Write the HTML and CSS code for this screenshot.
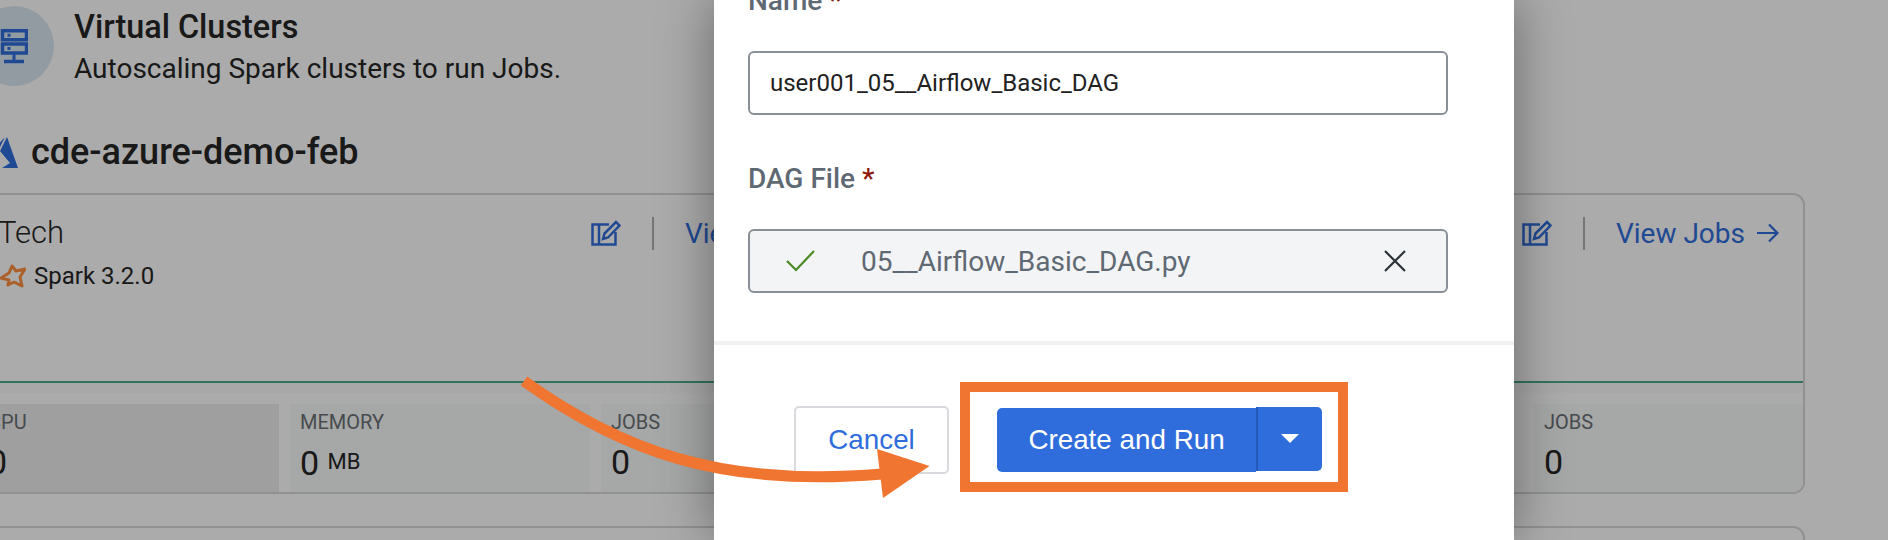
FILE: index.html
```html
<!DOCTYPE html>
<html lang="en">
  <head>
    <meta charset="UTF-8" />
    <title>Create Job</title>
    <link rel="stylesheet" href="styles.css">
  </head>
  <body>
    <div class="page">
      <main class="content">
        <header class="section-head">
          <div class="section-icon">
            <svg width="28" height="35" viewBox="0 0 28 35" fill="none" stroke="#2f6ddc" stroke-width="3.500">
              <rect x="2.500" y="1.750" width="24" height="9" />
              <rect x="2.500" y="15" width="24" height="9" />
              <path d="M14 25v7" stroke-width="3" />
              <path d="M4 32.500h20" />
              <path d="M7.500 6.300h3M7.500 19.500h3" stroke-width="3" />
            </svg>
          </div>
          <div>
            <h1 class="section-title">Virtual Clusters</h1>
            <p class="section-sub">Autoscaling Spark clusters to run Jobs.</p>
          </div>
        </header>

        <h2 class="cluster-name">
          <svg class="azure-logo" width="40" height="33" viewBox="-22 0 40 33">
            <path d="M5 1 L-14 22 L-20 32 L-3 32 L0 11 Z" fill="#2f6ddc" />
            <path d="M7 1 L18 32 L2 32 L10 27 L0 15 Z" fill="#2f6ddc" />
          </svg>
          cde-azure-demo-feb
        </h2>

        <section class="card">
          <div class="vc vc-left">
            <div class="vc-top">
              <div>
                <div class="vc-name">Tech</div>
                <div class="vc-version">
                  <svg width="26" height="24" viewBox="0 0 26 24" fill="none" stroke="#ff8f3f" stroke-width="3" stroke-linejoin="round">
                    <path d="M12 2 L16 7 L25 5 L20 13 L22 22 L14 18 L8 21 L9 16 L1 14 L9 9 Z" />
                  </svg>
                  Spark 3.2.0
                </div>
              </div>
              <div class="vc-actions">
                <svg class="edit-icon" width="30" height="26" viewBox="0 0 30 26" fill="none" stroke="#2f6ddc" stroke-width="2.500">
                  <path d="M18 4.500H1.500V24.500H24.500V12" />
                  <path d="M8 24V5" />
                  <path d="M12 19l1.500-5.500L25 2l3.500 3.500L17 17.500z" />
                </svg>
                <span class="vc-sep"></span>
                <a class="vc-link">View Jobs
                  <svg width="22" height="20" viewBox="0 0 22 20" fill="none" stroke="#2f6ddc" stroke-width="2.200">
                    <path d="M0 10h20M12 1.500l8.500 8.500-8.500 8.500" />
                  </svg>
                </a>
              </div>
            </div>
            <div class="vc-meter"></div>
            <div class="vc-stats">
              <div class="stat stat-cpu">
                <div class="stat-label">CPU</div>
                <div class="stat-value">0</div>
              </div>
              <div class="stat">
                <div class="stat-label">MEMORY</div>
                <div class="stat-value">0 <small>MB</small></div>
              </div>
              <div class="stat">
                <div class="stat-label">JOBS</div>
                <div class="stat-value">0</div>
              </div>
            </div>
          </div>
          <div class="vc vc-right">
            <div class="vc-top">
              <div></div>
              <div class="vc-actions">
                <svg class="edit-icon" width="30" height="26" viewBox="0 0 30 26" fill="none" stroke="#2f6ddc" stroke-width="2.500">
                  <path d="M18 4.500H1.500V24.500H24.500V12" />
                  <path d="M8 24V5" />
                  <path d="M12 19l1.500-5.500L25 2l3.500 3.500L17 17.500z" />
                </svg>
                <span class="vc-sep"></span>
                <a class="vc-link">View Jobs
                  <svg width="22" height="20" viewBox="0 0 22 20" fill="none" stroke="#2f6ddc" stroke-width="2.200">
                    <path d="M0 10h20M12 1.500l8.500 8.500-8.500 8.500" />
                  </svg>
                </a>
              </div>
            </div>
            <div class="vc-meter"></div>
            <div class="vc-stats vc-stats-right">
              <div class="stat">
                <div class="stat-label">JOBS</div>
                <div class="stat-value">0</div>
              </div>
            </div>
          </div>
        </section>

        <section class="card card-next"></section>
      </main>

      <div class="overlay"></div>

      <div class="modal">
        <div class="modal-body">
          <label class="field-label field-first">Name <span class="req">*</span></label>
          <div class="field-input">user001_05__Airflow_Basic_DAG</div>
          <label class="field-label">DAG File <span class="req">*</span></label>
          <div class="field-file">
            <svg class="file-check" width="30" height="22" viewBox="0 0 30 22" fill="none" stroke="#4a8a24" stroke-width="2.200">
              <path d="M1 11l9 9L28 1" />
            </svg>
            <span class="file-name">05__Airflow_Basic_DAG.py</span>
            <svg class="file-clear" width="22" height="22" viewBox="0 0 22 22" fill="none" stroke="#2b3238" stroke-width="2.200">
              <path d="M1 1l20 20M21 1L1 21" />
            </svg>
          </div>
        </div>
        <div class="modal-footer">
          <button type="button" class="btn-cancel">Cancel</button>
          <div class="btn-group">
            <button type="button" class="btn-primary">Create and Run</button>
            <button type="button" class="btn-caret"><span class="caret"></span></button>
          </div>
        </div>
      </div>

      <!-- annotation drawn over the screenshot -->
      <div class="callout"></div>
      <svg class="callout-arrow" width="1888" height="540" viewBox="0 0 1888 540">
        <path d="M524 381 C620 450 720 488 882 474" fill="none" stroke="#ef7530" stroke-width="11" />
        <polygon points="877,449 929.500,466 883,498" fill="#ef7530" />
      </svg>
    </div>
  </body>
</html>
```

FILE: styles.css
```css
* {
  box-sizing: border-box;
}

html,
body {
  margin: 0;
  height: 540px;
  overflow: hidden;
}

body {
  font-family: Roboto, "Liberation Sans", sans-serif;
  background-color: #fff;
  color: #262626;
}

.page {
  position: relative;
  width: 1888px;
  height: 540px;
  overflow: hidden;
}

/* page behind the dialog */
.content {
  margin-left: -26px;
  padding-top: 6px;
}

.section-head {
  display: flex;
  gap: 20px;
}

.section-icon {
  width: 80px;
  height: 80px;
  border-radius: 50%;
  background-color: #dbe8f2;
  display: flex;
  align-items: center;
  justify-content: center;
  flex-shrink: 0;
}

.section-title {
  margin: 3px 0 0;
  font-size: 32.400px;
  line-height: 36px;
  font-weight: 500;
}

.section-sub {
  margin: 6px 0 0;
  font-size: 28px;
  line-height: 36px;
}

.cluster-name {
  display: flex;
  align-items: center;
  gap: 13px;
  margin: 45px 0 0;
  height: 40px;
  font-size: 36px;
  font-weight: 500;
}

.azure-logo {
  margin-left: 4px;
  flex-shrink: 0;
}

.card {
  display: flex;
  width: 1831px;
  height: 301px;
  margin-top: 21px;
  border: 2px solid #d8d8d8;
  border-radius: 12px;
  overflow: hidden;
}

.card-next {
  margin-top: 32px;
}

.vc {
  display: flex;
  flex-direction: column;
  flex-shrink: 0;
}

.vc-left {
  width: 896px;
}

.vc-right {
  width: 931px;
}

.vc-top {
  display: flex;
  justify-content: space-between;
  height: 186px;
  padding: 21px 24px 0 24px;
}

.vc-name {
  margin: -1px 0 0 -2px;
  font-size: 31px;
  font-weight: 300;
  line-height: 36px;
}

.vc-version {
  display: flex;
  align-items: center;
  gap: 8px;
  margin-top: 11px;
  font-size: 24px;
}

.vc-actions {
  display: flex;
  align-items: center;
  height: 34px;
}

.vc-sep {
  width: 2px;
  height: 33px;
  margin: 0 31px;
  background-color: #b0b0b0;
}

.vc-link {
  display: flex;
  align-items: center;
  gap: 12px;
  font-size: 28px;
  color: #2f6ddc;
}

.vc-meter {
  height: 12px;
  border-top: 2px solid #4fae8a;
  background-color: #fbfbfb;
}

.vc-stats {
  display: grid;
  grid-template-columns: 303px 300px 300px;
  gap: 11px;
  padding-top: 11px;
  flex: 1;
  background-color: #fff;
}

.vc-stats-right {
  display: flex;
  justify-content: flex-end;
}

.vc-stats-right .stat {
  width: 269px;
}

.stat {
  padding: 7px 10px 0;
  background-color: #f8faf9;
}

.stat-cpu {
  padding-left: 12px;
  background-color: #eeeeee;
}

.stat-label {
  font-size: 20px;
  line-height: 22px;
  color: #6a7075;
}

.stat-value {
  margin-top: 10px;
  font-size: 34px;
  line-height: 38px;
}

.stat-value small {
  font-size: 22px;
  vertical-align: 6px;
}

.overlay {
  position: absolute;
  inset: 0;
  background-color: rgba(0, 0, 0, 0.33);
}

/* dialog */
.modal {
  position: absolute;
  top: 0;
  left: 714px;
  width: 800px;
  height: 540px;
  background-color: #fff;
  box-shadow: 0 0 50px rgba(0, 0, 0, 0.4);
  display: flex;
  flex-direction: column;
}

.modal-body {
  height: 341px;
  padding: 0 66px 0 34px;
  border-bottom: 4px solid #f1f1f1;
  box-sizing: content-box;
}

.field-label {
  display: block;
  margin-top: 49px;
  font-size: 28px;
  line-height: 30px;
  font-weight: 500;
  color: #5f6973;
}

.field-first {
  margin-top: 0;
  margin-bottom: -30px;
  position: relative;
  top: -14px;
}

.req {
  color: #8f1a0a;
}

.field-input,
.field-file {
  display: flex;
  align-items: center;
  height: 64px;
  border: 2px solid #888f96;
  border-radius: 6px;
}

.field-input {
  margin-top: 51px;
  padding-left: 20px;
  font-size: 24px;
  color: #222;
}

.field-file {
  margin-top: 35px;
  font-size: 28px;
  background-color: #f3f4f6;
  color: #5f6973;
}

.file-check {
  margin-left: 36px;
}

.file-name {
  margin-left: 45px;
  flex: 1;
}

.file-clear {
  margin-right: 40px;
}

.modal-footer {
  display: flex;
  align-items: center;
  gap: 48px;
  padding: 61px 0 0 80px;
}

.modal-footer button {
  font-family: "Liberation Sans", Arial, sans-serif;
  font-size: 27.800px;
  line-height: 60px;
  padding-bottom: 2px;
}

.btn-cancel {
  width: 155px;
  height: 68px;
  background-color: #fff;
  color: #2f6ddc;
  border: 2px solid #d9d9de;
  border-radius: 5px;
}

.btn-group {
  display: flex;
  align-items: center;
}

.btn-primary {
  width: 259px;
  height: 64px;
  background-color: #2f6ddc;
  color: #fff;
  border: none;
  border-radius: 5px 0 0 5px;
}

.btn-caret {
  width: 66px;
  height: 64px;
  margin-top: -2px;
  background-color: #2f6ddc;
  border: none;
  border-left: 2px solid #2459b8;
  border-radius: 0 5px 5px 0;
}

.caret {
  display: block;
  width: 0;
  height: 0;
  margin: 0 auto;
  border-left: 9px solid transparent;
  border-right: 9px solid transparent;
  border-top: 9px solid #fff;
}

/* annotation */
.callout {
  position: absolute;
  left: 960px;
  top: 382px;
  width: 388px;
  height: 110px;
  border: 10px solid #ef7530;
}

.callout-arrow {
  position: absolute;
  inset: 0;
}
```
